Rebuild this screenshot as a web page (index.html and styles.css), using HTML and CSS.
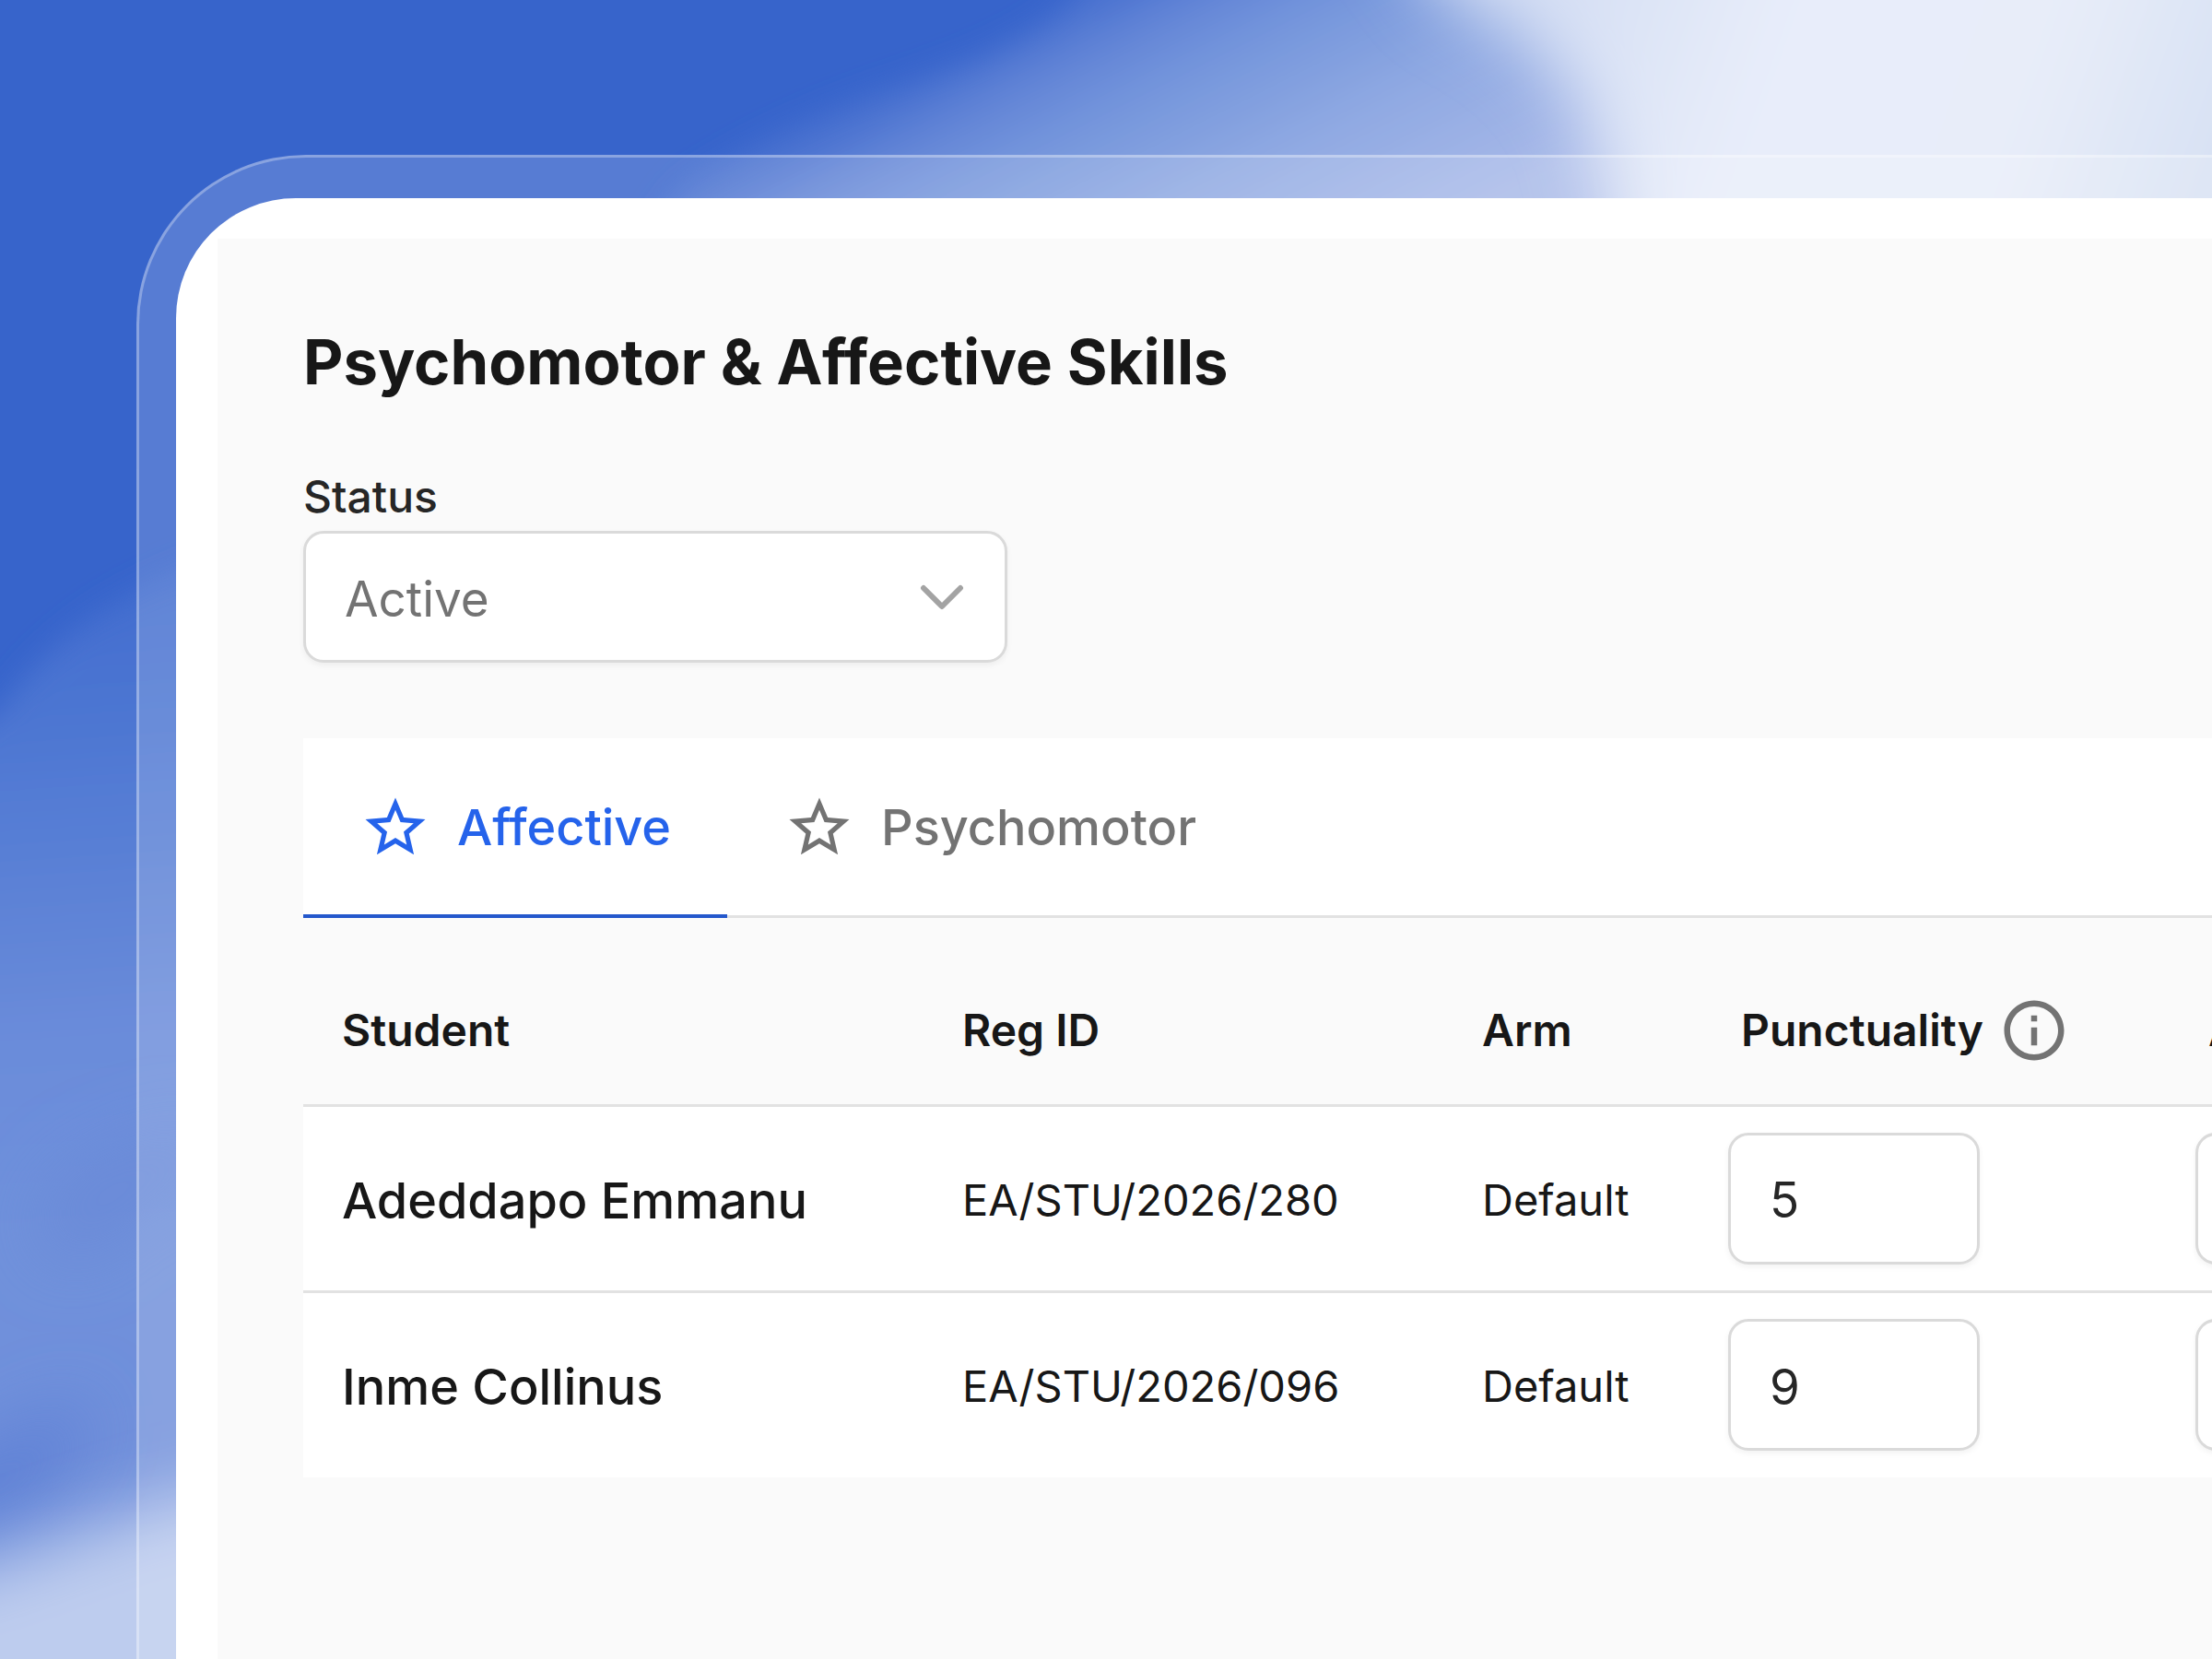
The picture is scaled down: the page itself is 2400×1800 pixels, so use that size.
FILE: index.html
```html
<!DOCTYPE html>
<html lang="en">
<head>
    <meta charset="UTF-8">
    <meta name="viewport" content="width=device-width, initial-scale=1.0">
    <title>Psychomotor &amp; Affective Skills</title>
    <link rel="stylesheet" href="styles.css">
</head>
<body>
    <svg class="backdrop" viewBox="0 0 2400 1800" preserveAspectRatio="none" aria-hidden="true">
        <defs>
            <linearGradient id="topWave" gradientUnits="userSpaceOnUse" x1="1170" y1="0" x2="1350" y2="356">
                <stop offset="0" stop-color="#466fcf"/>
                <stop offset="0.16" stop-color="#6486d7"/>
                <stop offset="0.32" stop-color="#7596dc"/>
                <stop offset="0.6" stop-color="#8ea8e2"/>
                <stop offset="1" stop-color="#a8b9e8"/>
            </linearGradient>
            <linearGradient id="leftWave" gradientUnits="userSpaceOnUse" x1="60" y1="640" x2="140" y2="1800">
                <stop offset="0" stop-color="#426dcf"/>
                <stop offset="0.2" stop-color="#547cd4"/>
                <stop offset="0.42" stop-color="#6b8cda"/>
                <stop offset="0.6" stop-color="#6f91db"/>
                <stop offset="0.8" stop-color="#7190db"/>
                <stop offset="1" stop-color="#7b98de"/>
            </linearGradient>
            <linearGradient id="glow" gradientUnits="userSpaceOnUse" x1="1650" y1="0" x2="2400" y2="260">
                <stop offset="0" stop-color="#d3ddf3"/>
                <stop offset="0.35" stop-color="#e8edfa"/>
                <stop offset="0.7" stop-color="#e8edf9"/>
                <stop offset="1" stop-color="#d6e0f3"/>
            </linearGradient>
            <filter id="soft" x="-20%" y="-20%" width="140%" height="140%">
                <feGaussianBlur stdDeviation="16"/>
            </filter>
            <filter id="softer" x="-50%" y="-50%" width="200%" height="200%">
                <feGaussianBlur stdDeviation="36"/>
            </filter>
        </defs>
        <rect width="2400" height="1800" fill="#3764cb"/>
        <path d="M1230 -100 L1160 0 C1110 50 1030 75 940 105 C860 135 800 165 740 205 L660 320 H2500 V-100 Z" fill="url(#topWave)" filter="url(#soft)"/>
        <path d="M1480 -120 L1570 0 C1660 40 1710 90 1730 160 L1760 320 H2600 V-120 Z" fill="url(#glow)" filter="url(#softer)"/>
        <path d="M-100 840 L0 770 C50 700 110 650 220 610 L330 580 V1900 H-100 Z" fill="url(#leftWave)" filter="url(#soft)"/>
        <path d="M40 1330 C60 1260 130 1240 230 1220 L230 1290 C150 1290 120 1370 60 1370 Z" fill="#6a8ad8" filter="url(#softer)"/>
        <path d="M-80 1600 C0 1570 50 1530 100 1520 C80 1600 40 1650 -80 1670 Z" fill="#5d80d5" filter="url(#softer)"/>
        <path d="M-120 1720 C20 1710 90 1640 320 1600 V1920 H-120 Z" fill="#bdccee" filter="url(#softer)"/>
    </svg>

    <div class="frame">
        <div class="card">
            <main class="panel">
                <h1>Psychomotor &amp; Affective Skills</h1>

                <div class="field">
                    <label for="status">Status</label>
                    <div class="select-wrap">
                        <select id="status">
                            <option>Active</option>
                            <option>Inactive</option>
                        </select>
                        <svg class="chevron" viewBox="0 0 48 28" aria-hidden="true">
                            <path d="M4 4 L24 24 L44 4"/>
                        </svg>
                    </div>
                </div>

                <div class="tabs" role="tablist">
                    <button class="tab active" role="tab" aria-selected="true">
                        <svg class="icon" viewBox="0 0 24 24" aria-hidden="true">
                            <path d="M22 9.24l-7.19-.62L12 2 9.19 8.63 2 9.24l5.46 4.73L5.82 21 12 17.27 18.18 21l-1.63-7.03L22 9.24zM12 15.4l-3.76 2.27 1-4.28-3.32-2.88 4.38-.38L12 6.1l1.71 4.04 4.38.38-3.32 2.88 1 4.28L12 15.4z"/>
                        </svg>
                        Affective
                    </button>
                    <button class="tab" role="tab" aria-selected="false">
                        <svg class="icon" viewBox="0 0 24 24" aria-hidden="true">
                            <path d="M22 9.24l-7.19-.62L12 2 9.19 8.63 2 9.24l5.46 4.73L5.82 21 12 17.27 18.18 21l-1.63-7.03L22 9.24zM12 15.4l-3.76 2.27 1-4.28-3.32-2.88 4.38-.38L12 6.1l1.71 4.04 4.38.38-3.32 2.88 1 4.28L12 15.4z"/>
                        </svg>
                        Psychomotor
                    </button>
                </div>

                <table>
                    <colgroup>
                        <col class="col-student">
                        <col class="col-reg">
                        <col class="col-arm">
                        <col class="col-score">
                        <col class="col-score">
                    </colgroup>
                    <thead>
                        <tr>
                            <th>Student</th>
                            <th>Reg ID</th>
                            <th>Arm</th>
                            <th>
                                <span class="score-head">
                                    Punctuality
                                    <svg class="icon" viewBox="0 0 24 24" aria-hidden="true">
                                        <path d="M11 7h2v2h-2zm0 4h2v6h-2zm1-9C6.48 2 2 6.48 2 12s4.48 10 10 10 10-4.48 10-10S17.52 2 12 2zm0 18c-4.41 0-8-3.59-8-8s3.59-8 8-8 8 3.59 8 8-3.59 8-8 8z"/>
                                    </svg>
                                </span>
                            </th>
                            <th>Attendance</th>
                        </tr>
                    </thead>
                    <tbody>
                        <tr>
                            <td class="name">Adeddapo Emmanu</td>
                            <td>EA/STU/2026/280</td>
                            <td>Default</td>
                            <td class="score"><input type="text" value="5" aria-label="Punctuality, Adeddapo Emmanu"></td>
                            <td class="score"><input type="text" aria-label="Attendance, Adeddapo Emmanu"></td>
                        </tr>
                        <tr>
                            <td class="name">Inme Collinus</td>
                            <td>EA/STU/2026/096</td>
                            <td>Default</td>
                            <td class="score"><input type="text" value="9" aria-label="Punctuality, Inme Collinus"></td>
                            <td class="score"><input type="text" aria-label="Attendance, Inme Collinus"></td>
                        </tr>
                    </tbody>
                </table>
            </main>
        </div>
    </div>
</body>
</html>
```
FILE: styles.css
```css
* {
    margin: 0;
    padding: 0;
    box-sizing: border-box;
    font-family: 'Inter', sans-serif;
    font-optical-sizing: none;
}

body {
    background-color: #3764cb;
    min-height: 100vh;
    padding: 168px 0 0 148px;
    display: flex;
    overflow: hidden;
}

.backdrop {
    position: absolute;
    inset: 0;
    width: 100%;
    height: 100%;
    z-index: -1;
}

/* translucent rim around the card */
.frame {
    flex: 1;
    min-width: 0;
    display: flex;
    padding: 44px 0 0 40px;
    background-color: rgba(255, 255, 255, 0.16);
    border: solid rgba(255, 255, 255, 0.3);
    border-width: 3px 0 0 3px;
    border-top-left-radius: 184px;
}

.card {
    flex: 1;
    min-width: 0;
    display: flex;
    padding: 44px 0 0 45px;
    background-color: #fff;
    border-top-left-radius: 130px;
    overflow: hidden;
}

.panel {
    flex: 1;
    min-width: 0;
    padding: 92px 0 92px 93px;
    background-color: #fafafa;
    overflow: hidden;
}

h1 {
    font-size: 67px;
    line-height: 84px;
    font-weight: 700;
    color: #171717;
    margin-bottom: 72px;
}

.field {
    width: 764px;
    margin-bottom: 82px;
}

.field label {
    display: block;
    font-size: 48px;
    line-height: 64px;
    font-weight: 500;
    color: #262626;
    margin-bottom: 5px;
}

.select-wrap {
    display: grid;
    align-items: center;
}

.select-wrap select,
.select-wrap .chevron {
    grid-area: 1 / 1;
}

select,
input {
    height: 143px;
    width: 100%;
    padding: 4px 42px 0;
    font-size: 53px;
    color: #262626;
    background-color: #fff;
    border: 3px solid #dadada;
    border-radius: 22px;
    box-shadow: 0 3px 6px rgba(0, 0, 0, 0.05);
}

select {
    appearance: none;
    color: #737373;
}

.chevron {
    width: 48px;
    height: 28px;
    justify-self: end;
    margin-right: 47px;
    fill: none;
    stroke: #a3a3a3;
    stroke-width: 6;
    stroke-linecap: round;
    stroke-linejoin: round;
    pointer-events: none;
}

.tabs {
    display: flex;
    background-color: #fff;
    box-shadow: inset 0 -3px #e2e2e2;
    margin-bottom: 40px;
}

.tab {
    display: flex;
    align-items: center;
    gap: 28px;
    height: 195px;
    padding: 2px 61px 0;
    font-size: 54px;
    font-weight: 500;
    color: #737373;
    background: none;
    border: none;
    border-bottom: 4px solid transparent;
    cursor: pointer;
}

.tab.active {
    color: #2563eb;
    border-bottom-color: #2458cc;
}

.icon {
    width: 78px;
    height: 78px;
    fill: currentColor;
}

table {
    width: 2532px;
    table-layout: fixed;
    border-collapse: collapse;
}

.col-student {
    width: 673px;
}

.col-reg {
    width: 564px;
}

.col-arm {
    width: 281px;
}

.col-score {
    width: 507px;
}

th,
td {
    padding: 2px 42px 0;
    text-align: left;
    font-size: 47px;
    color: #171717;
    white-space: nowrap;
}

th {
    height: 163px;
    font-size: 48px;
    font-weight: 600;
}

td {
    height: 202px;
    background-color: #fff;
    border-top: 3px solid #e2e2e2;
}

td.name {
    padding-top: 4px;
    font-size: 54px;
    font-weight: 500;
}

td.score {
    padding: 0 28px;
}

.score input {
    display: block;
    width: 273px;
}

.score-head {
    display: flex;
    align-items: center;
    gap: 16px;
}

.score-head .icon {
    color: #737373;
}
```
